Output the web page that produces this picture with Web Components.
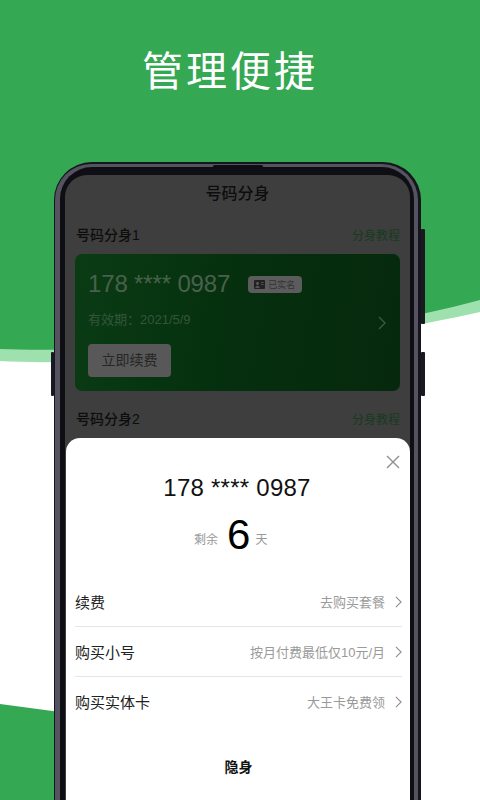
<!DOCTYPE html>
<html lang="zh">
<head>
<meta charset="utf-8">
<title>管理便捷</title>
<style>
  html, body { margin: 0; padding: 0; height: 100%; overflow: hidden; background: #fff; }
  body { font-family: "Liberation Sans", "Noto Sans CJK SC", sans-serif; }
</style>
</head>
<body>
<promo-page heading="管理便捷">
  <phone-frame>
    <number-screen>
      <section-head label="号码分身1"></section-head>
      <number-card phone="178 **** 0987" expiry="有效期：2021/5/9" action="立即续费"></number-card>
      <section-head label="号码分身2"></section-head>
      <action-sheet slot="sheet" phone="178 **** 0987" days="6">
        <sheet-row label="续费" hint="去购买套餐"></sheet-row>
        <sheet-row label="购买小号" hint="按月付费最低仅10元/月"></sheet-row>
        <sheet-row label="购买实体卡" hint="大王卡免费领"></sheet-row>
      </action-sheet>
    </number-screen>
  </phone-frame>
</promo-page>

<script>
const chevron = (color, w, h) => `<svg width="${w}" height="${h}" viewBox="0 0 8 14" fill="none" stroke="${color}" stroke-width="1.3"><path d="M1 1l6 6-6 6"/></svg>`;

class PromoPage extends HTMLElement {
  constructor() {
    super();
    this.attachShadow({ mode: 'open' });
  }
  connectedCallback() {
    this.shadowRoot.innerHTML = `
      <style>
        :host { display: block; position: relative; width: 480px; height: 800px; overflow: hidden; background: #fff; }
        .bg { position: absolute; left: 0; top: 0; }
        .content { position: relative; display: flex; flex-direction: column; align-items: flex-start; padding-left: 54px; }
        h1 {
          margin: 0; height: 162px; box-sizing: border-box; padding: 42px 0 0 88px;
          font-size: 41px; line-height: 60px; font-weight: 400; letter-spacing: 3px; color: #fff;
        }
      </style>
      <svg class="bg" width="480" height="800" viewBox="0 0 480 800">
        <path d="M0 0H480V312C400 330 300 345 200 354C120 361 50 364 0 361Z" fill="#9ee0ae"/>
        <path d="M0 0H480V300C400 322 300 335 200 343C120 349 50 351 0 349Z" fill="#34a853"/>
        <path d="M0 704L60 712L60 800H0Z" fill="#34a853"/>
      </svg>
      <div class="content">
        <h1>${this.getAttribute('heading')}</h1>
        <slot></slot>
      </div>`;
  }
}

class PhoneFrame extends HTMLElement {
  constructor() {
    super();
    this.attachShadow({ mode: 'open' });
    this.shadowRoot.innerHTML = `
      <style>
        :host { display: block; position: relative; width: 367px; height: 660px; }
        .outer {
          box-sizing: border-box; width: 100%; height: 100%; padding: 2px 3px 0 1px;
          background: #16141c; border-radius: 38px 38px 0 0;
        }
        .band {
          box-sizing: border-box; height: 100%; padding: 3px 4px 0 5px;
          background: #55535f; border-radius: 36px 36px 0 0;
        }
        .bezel {
          box-sizing: border-box; height: 100%; padding: 8px 4px 0 5px;
          background: #0f0e14; border-radius: 32px 32px 0 0;
        }
        .notch { position: absolute; left: 159px; top: 3px; width: 50px; height: 3px; background: #0f0e14; border-radius: 2px; }
        .btn { position: absolute; background: #1a1820; border-radius: 1px; }
        .l1 { left: -3px; top: 190px; width: 3px; height: 44px; }
        .r1 { right: -4px; top: 67px; width: 4px; height: 95px; }
        .r2 { right: -4px; top: 190px; width: 4px; height: 44px; }
      </style>
      <div class="btn l1"></div><div class="btn r1"></div><div class="btn r2"></div>
      <div class="outer"><div class="band"><div class="bezel"><slot></slot></div></div></div>
      <div class="notch"></div>`;
  }
}

class NumberScreen extends HTMLElement {
  constructor() {
    super();
    this.attachShadow({ mode: 'open' });
    this.shadowRoot.innerHTML = `
      <style>
        :host {
          display: block; position: relative; height: 100%; box-sizing: border-box;
          padding: 0 10px; background: #3e3e3e; border-radius: 22px 22px 0 0; overflow: hidden;
        }
        .title { height: 47px; padding-top: 7px; box-sizing: border-box; text-align: center; font-size: 16px; line-height: 24px; font-weight: 500; color: #0d0d0d; }
      </style>
      <div class="title">号码分身</div>
      <slot></slot>
      <slot name="sheet"></slot>`;
  }
}

class SectionHead extends HTMLElement {
  constructor() {
    super();
    this.attachShadow({ mode: 'open' });
  }
  connectedCallback() {
    this.shadowRoot.innerHTML = `
      <style>
        :host { display: flex; justify-content: space-between; align-items: center; height: 24px; padding: 0 0 0 1px; margin-bottom: 8px; }
        .name { font-size: 14px; font-weight: 500; color: #0d0d0d; }
        .link { font-size: 12px; color: #173b20; }
      </style>
      <span class="name">${this.getAttribute('label')}</span>
      <span class="link">分身教程</span>`;
  }
}

class NumberCard extends HTMLElement {
  constructor() {
    super();
    this.attachShadow({ mode: 'open' });
  }
  connectedCallback() {
    this.shadowRoot.innerHTML = `
      <style>
        :host {
          display: flex; align-items: center; box-sizing: border-box; height: 137px; margin-bottom: 15px;
          padding: 0 13px; border-radius: 7px; background: linear-gradient(100deg, #0a3c14, #052f0e 50%, #06290d);
        }
        .main { flex: 1; display: flex; flex-direction: column; align-items: flex-start; }
        .top { display: flex; align-items: center; gap: 18px; height: 30px; margin-top: 1px; }
        .phone { font-size: 24px; letter-spacing: -.15px; line-height: 30px; color: #4a604d; }
        .chip {
          display: flex; align-items: center; gap: 3px; box-sizing: border-box; width: 54px; height: 17px; padding-left: 6px;
          background: #5c5c5c; border-radius: 4px; font-size: 9px; color: #333;
        }
        .expiry { font-size: 13px; line-height: 18px; margin-top: 12px; color: #35553b; }
        .act {
          box-sizing: border-box; width: 83px; height: 33px; margin-top: 15px; border-radius: 4px;
          background: #585858; color: #262626; font-size: 14px; line-height: 33px; text-align: center;
        }
        .go { display: flex; padding-right: 1px; }
      </style>
      <div class="main">
        <div class="top">
          <span class="phone">${this.getAttribute('phone')}</span>
          <span class="chip">
            <svg width="11" height="9" viewBox="0 0 11 9"><rect width="11" height="9" rx="1" fill="#222"/><circle cx="3.5" cy="3.5" r="1.4" fill="#5c5c5c"/><path d="M1.6 7.4c.4-1.6 3.4-1.6 3.8 0zM7 2.5h2.6M7 4.5h2.6" fill="#5c5c5c" stroke="#5c5c5c" stroke-width=".8"/></svg>
            已实名
          </span>
        </div>
        <div class="expiry">${this.getAttribute('expiry')}</div>
        <div class="act">${this.getAttribute('action')}</div>
      </div>
      <span class="go">${chevron('#3f5a44', 8, 14)}</span>`;
  }
}

class ActionSheet extends HTMLElement {
  constructor() {
    super();
    this.attachShadow({ mode: 'open' });
  }
  connectedCallback() {
    this.shadowRoot.innerHTML = `
      <style>
        :host {
          display: flex; flex-direction: column; position: absolute; left: 1px; right: 0; top: 263px; bottom: 0;
          background: #fff; border-radius: 14px 14px 0 0; padding: 0 8px 0 9px;
        }
        .close { position: absolute; right: 10px; top: 17px; display: flex; }
        .phone { margin-top: 35px; padding-right: 3px; text-align: center; font-size: 24px; letter-spacing: .25px; line-height: 30px; color: #111; }
        .left { display: flex; align-items: center; gap: 9px; height: 58px; margin-top: 3px; padding-left: 119px; color: #999; font-size: 12px; }
        .left span { margin-top: 7px; }
        .left b { font-size: 42px; line-height: 58px; font-weight: 400; color: #000; margin-right: -4px; }
        .rows { margin-top: 13px; }
        .hide { margin-top: 30px; text-align: center; font-size: 14px; line-height: 22px; font-weight: 700; color: #111; }
      </style>
      <span class="close"><svg width="14" height="14" viewBox="0 0 14 14" stroke="#8f8f8f" stroke-width="1.4"><path d="M1 1l12 12M13 1L1 13"/></svg></span>
      <div class="phone">${this.getAttribute('phone')}</div>
      <div class="left"><span>剩余</span><b>${this.getAttribute('days')}</b><span>天</span></div>
      <div class="rows"><slot></slot></div>
      <div class="hide">隐身</div>`;
  }
}

class SheetRow extends HTMLElement {
  constructor() {
    super();
    this.attachShadow({ mode: 'open' });
  }
  connectedCallback() {
    this.shadowRoot.innerHTML = `
      <style>
        :host { display: flex; align-items: center; justify-content: space-between; height: 49px; border-bottom: 1px solid #e6e6e6; }
        :host(:last-child) { border-bottom: 0; }
        .label { font-size: 15px; color: #222; }
        .right { display: flex; align-items: center; gap: 10px; font-size: 13px; color: #9a9a9a; }
        .right svg { display: block; }
      </style>
      <span class="label">${this.getAttribute('label')}</span>
      <span class="right">${this.getAttribute('hint')}${chevron('#8f8f8f', 7, 12)}</span>`;
  }
}

customElements.define('promo-page', PromoPage);
customElements.define('phone-frame', PhoneFrame);
customElements.define('number-screen', NumberScreen);
customElements.define('section-head', SectionHead);
customElements.define('number-card', NumberCard);
customElements.define('action-sheet', ActionSheet);
customElements.define('sheet-row', SheetRow);
</script>
</body>
</html>
